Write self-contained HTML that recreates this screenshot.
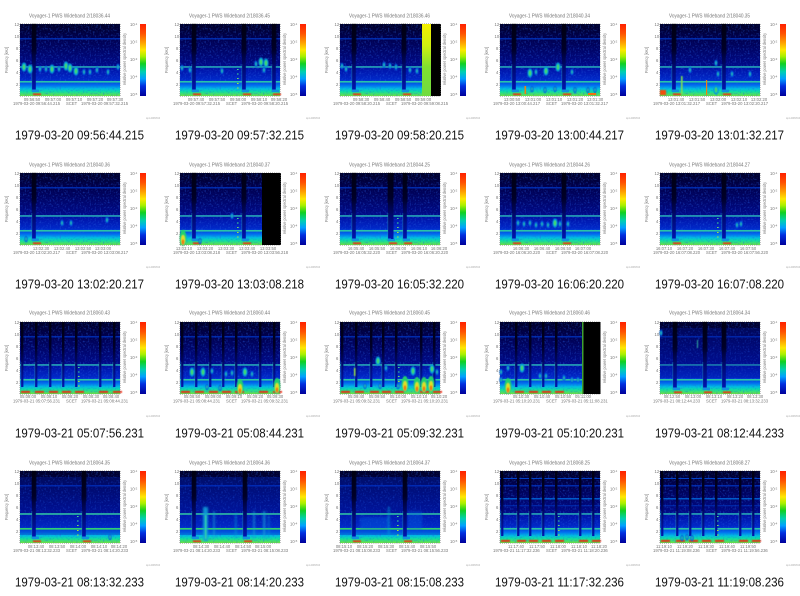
<!DOCTYPE html>
<html><head><meta charset="utf-8"><title>Voyager-1 PWS Wideband</title>
<style>
html,body{margin:0;padding:0;background:#fff}
svg{display:block}
text{font-family:"Liberation Sans",sans-serif}
.t{font-size:5px;fill:#777}
.s{font-size:4.2px;fill:#777}
.c{font-size:13px;fill:#111}
.u{font-size:3px;fill:#aaa}
</style></head><body>
<svg xmlns="http://www.w3.org/2000/svg" width="800" height="596" viewBox="0 0 800 596">
<defs>
<linearGradient id="bg" x1="0" y1="0" x2="0" y2="1">
<stop offset="0" stop-color="#000028"/><stop offset=".2" stop-color="#000050"/><stop offset=".58" stop-color="#000a88"/>
<stop offset=".6" stop-color="#0010a4"/><stop offset=".77" stop-color="#0028c8"/><stop offset=".85" stop-color="#0070f0"/>
<stop offset=".9" stop-color="#00c0e0"/><stop offset=".94" stop-color="#10e0a0"/><stop offset="1" stop-color="#70e040"/>
</linearGradient>
<linearGradient id="cb" x1="0" y1="0" x2="0" y2="1">
<stop offset="0" stop-color="#ff2000"/><stop offset=".13" stop-color="#ff5000"/><stop offset=".26" stop-color="#ffa000"/><stop offset=".36" stop-color="#ffe800"/><stop offset=".45" stop-color="#a8f000"/><stop offset=".55" stop-color="#10d020"/><stop offset=".66" stop-color="#00d0b0"/><stop offset=".76" stop-color="#00a0ff"/><stop offset=".86" stop-color="#0030e0"/><stop offset="1" stop-color="#00009a"/>
</linearGradient>
<linearGradient id="kg" x1="0" y1="0" x2="0" y2="1">
<stop offset="0" stop-color="#000010"/><stop offset=".38" stop-color="#000028"/><stop offset=".65" stop-color="#000870"/><stop offset="1" stop-color="#0014b0"/>
</linearGradient>
<linearGradient id="yb" x1="0" y1="0" x2="0" y2="1">
<stop offset="0" stop-color="#f6f000"/><stop offset=".3" stop-color="#d0f010"/><stop offset=".6" stop-color="#80e030"/><stop offset="1" stop-color="#70dc40"/>
</linearGradient>
<filter id="n" filterUnits="userSpaceOnUse" x="20" y="24" width="100" height="72"><feTurbulence type="fractalNoise" baseFrequency=".6" numOctaves="1" seed="4"/><feColorMatrix values="0 0 0 0 .02 0 0 0 0 .12 0 0 0 0 .75 3 0 0 0 -1.5"/></filter>
<filter id="b" filterUnits="userSpaceOnUse" x="-160" y="-120" width="480" height="360"><feGaussianBlur stdDeviation=".55"/></filter>
<filter id="bb" filterUnits="userSpaceOnUse" x="-160" y="-120" width="480" height="360"><feGaussianBlur stdDeviation="1"/></filter>
<g id="p">
<rect x="20" y="24" width="100" height="72" fill="url(#bg)"/>
<rect x="20" y="24" width="100" height="72" filter="url(#n)" opacity=".5"/>
<rect x="20" y="38.2" width="100" height="1.2" fill="#0034c0"/>
<rect x="20" y="66.2" width="100" height="1.5" fill="#28b0b8"/>
<rect x="20" y="81" width="100" height="1.6" fill="#28c4a8"/>
</g>
<g id="a">
<path d="M20 23.5H120M20 96.5H120M19.5 24V96M120.5 24V96" stroke="#777" stroke-width=".7" stroke-dasharray=".6 1.5" fill="none"/>
<rect x="140" y="24" width="6" height="72" fill="url(#cb)"/>
<text class="s" x="14.5" y="26">12</text><text class="s" x="14.5" y="38">10</text><text class="s" x="16" y="50">8</text><text class="s" x="16" y="62">6</text><text class="s" x="16" y="74">4</text><text class="s" x="16" y="86">2</text>
<text class="s" transform="rotate(-90 8 60)" x="8" y="60" text-anchor="middle" textLength="26" lengthAdjust="spacingAndGlyphs">Frequency [kHz]</text>
<text class="s" transform="rotate(-90 126 59)" x="126" y="59" text-anchor="middle" textLength="52" lengthAdjust="spacingAndGlyphs">relative power spectral density</text>
<text class="s" x="130" y="26">10<tspan dy="-1.2" font-size="3">-1</tspan></text><text class="s" x="130" y="43.5">10<tspan dy="-1.2" font-size="3">-2</tspan></text><text class="s" x="130" y="61">10<tspan dy="-1.2" font-size="3">-3</tspan></text><text class="s" x="130" y="78.5">10<tspan dy="-1.2" font-size="3">-4</tspan></text><text class="s" x="130" y="96">10<tspan dy="-1.2" font-size="3">-5</tspan></text>
<text class="u" x="146" y="119" textLength="14" lengthAdjust="spacingAndGlyphs">wp1-20060510</text>
</g>
<g id="k"><rect x="-.5" y="24" width="5" height="30" fill="#000010" opacity=".6" filter="url(#b)"/><rect x="0" y="24" width="3.8" height="66" fill="url(#kg)"/><rect x="-.5" y="64" width=".7" height="28" fill="#2090b0" opacity=".6"/><rect x="0" y="89.5" width="7" height="2.6" fill="#1090e0"/><g filter="url(#b)"><rect x="1" y="93.4" width="8" height="1.7" fill="#f03010"/></g></g>
<g id="m"><rect x="0" y="24" width="2.4" height="65" fill="url(#kg)"/><rect x="-.4" y="64" width=".6" height="28" fill="#30b0b0" opacity=".6"/><g filter="url(#b)"><rect x="0" y="93" width="9" height="1.8" fill="#f02808"/></g></g>
<g id="d" fill="#40d890"><rect x="0" y="69" width="1.6" height="1"/><rect x="0" y="73.5" width="1.6" height="1"/><rect x="0" y="78" width="1.6" height="1" fill="#70e060"/><rect x="0" y="83" width="1.6" height="1" fill="#a0e040"/><rect x="0" y="87.5" width="1.6" height="1" fill="#a0e040"/></g>
<g id="e" filter="url(#b)"><ellipse cx="0" cy="0" rx="2.6" ry="4.6" fill="#0098d8"/><ellipse cx="0" cy="0" rx="1.2" ry="2.8" fill="#40e060"/></g>
<g id="l" filter="url(#b)"><ellipse cx="0" cy="0" rx="1.7" ry="3.2" fill="#0060e0"/><ellipse cx="0" cy="0" rx=".7" ry="1.7" fill="#20c0a0"/></g>
<g id="h" filter="url(#b)"><ellipse cx="0" cy="0" rx="3.4" ry="8" fill="#20d070"/><ellipse cx="0" cy="2" rx="2" ry="5" fill="#e0e020"/><ellipse cx="0" cy="4" rx="1.2" ry="2.8" fill="#f07010"/></g>
</defs>
<rect width="800" height="596" fill="#fff"/>

<!-- ROW 1 -->
<g>
<use href="#p"/><use href="#k" x="32"/>
<use href="#e" x="24" y="67"/><use href="#e" x="30" y="69"/><use href="#l" x="40" y="69"/><use href="#l" x="46" y="69"/><use href="#e" x="52" y="69"/><use href="#l" x="59" y="69"/><use href="#e" x="66" y="66"/><use href="#e" x="70" y="68"/><use href="#e" x="76" y="71"/><use href="#l" x="84" y="72"/><use href="#l" x="90" y="72"/><use href="#l" x="97" y="70"/><use href="#l" x="108" y="72"/><use href="#l" x="118" y="67"/>
<use href="#a"/>
<text class="t" x="29" y="17.5" textLength="81" lengthAdjust="spacingAndGlyphs">Voyager-1 PWS Wideband 2/18036.44</text>
<text class="s" text-anchor="middle" y="101"><tspan x="32">09:56:50</tspan><tspan x="53">09:57:00</tspan><tspan x="74">09:57:10</tspan><tspan x="95">09:57:20</tspan><tspan x="115">09:57:30</tspan></text>
<text class="s" y="105"><tspan x="13">1979-03-20 09:56:44.215</tspan><tspan x="66">SCET</tspan><tspan x="81">1979-03-20 09:57:32.215</tspan></text>
<text class="c" x="15" y="139.3" textLength="129" lengthAdjust="spacingAndGlyphs">1979-03-20 09:56:44.215</text>
</g>
<g transform="translate(160,0)">
<use href="#p"/><use href="#k" x="32"/><use href="#k" x="82"/><use href="#k" x="112"/>
<use href="#d" x="77"/><use href="#l" x="22" y="68"/><use href="#l" x="30" y="70"/><use href="#e" x="101" y="62"/><use href="#e" x="106" y="63"/><use href="#l" x="96" y="64"/><use href="#l" x="104" y="70"/><use href="#l" x="62" y="71"/>
<use href="#a"/>
<text class="t" x="29" y="17.5" textLength="81" lengthAdjust="spacingAndGlyphs">Voyager-1 PWS Wideband 2/18036.45</text>
<text class="s" text-anchor="middle" y="101"><tspan x="36">09:57:40</tspan><tspan x="57">09:57:50</tspan><tspan x="78">09:58:00</tspan><tspan x="99">09:58:10</tspan><tspan x="119">09:58:20</tspan></text>
<text class="s" y="105"><tspan x="13">1979-03-20 09:57:32.215</tspan><tspan x="66">SCET</tspan><tspan x="81">1979-03-20 09:58:20.215</tspan></text>
<text class="c" x="15" y="139.3" textLength="129" lengthAdjust="spacingAndGlyphs">1979-03-20 09:57:32.215</text>
</g>
<g transform="translate(320,0)">
<use href="#p"/><use href="#k" x="32"/><use href="#k" x="82"/>
<use href="#l" x="22" y="66"/><use href="#l" x="26" y="69"/><use href="#l" x="64" y="65"/><use href="#l" x="70" y="66"/><use href="#l" x="76" y="67"/><use href="#l" x="90" y="70"/><use href="#l" x="97" y="71"/>
<rect x="102" y="24" width="9" height="72" fill="url(#yb)"/><rect x="111" y="24" width="10" height="72" fill="#000"/>
<use href="#a"/>
<text class="t" x="29" y="17.5" textLength="81" lengthAdjust="spacingAndGlyphs">Voyager-1 PWS Wideband 2/18036.46</text>
<text class="s" text-anchor="middle" y="101"><tspan x="41">09:58:30</tspan><tspan x="62">09:58:40</tspan><tspan x="83">09:58:50</tspan><tspan x="103">09:59:00</tspan></text>
<text class="s" y="105"><tspan x="13">1979-03-20 09:58:20.215</tspan><tspan x="66">SCET</tspan><tspan x="81">1979-03-20 09:59:08.215</tspan></text>
<text class="c" x="15" y="139.3" textLength="129" lengthAdjust="spacingAndGlyphs">1979-03-20 09:58:20.215</text>
</g>
<g transform="translate(480,0)">
<use href="#p"/><use href="#k" x="32"/><use href="#k" x="82"/>
<use href="#e" x="50" y="73"/><use href="#e" x="66" y="71"/><use href="#e" x="78" y="67"/><use href="#l" x="56" y="72"/><use href="#l" x="92" y="72"/>
<rect x="44.5" y="86" width="1.6" height="8" fill="#f08010"/><use href="#l" x="65" y="90"/><use href="#l" x="52" y="89"/><use href="#l" x="75" y="89"/><use href="#l" x="95" y="90"/><use href="#l" x="108" y="90"/><use href="#l" x="115" y="90"/><rect x="108" y="93" width="8" height="2" fill="#f07010"/>
<use href="#a"/>
<text class="t" x="29" y="17.5" textLength="81" lengthAdjust="spacingAndGlyphs">Voyager-1 PWS Wideband 2/18040.34</text>
<text class="s" text-anchor="middle" y="101"><tspan x="32">13:00:50</tspan><tspan x="53">13:01:00</tspan><tspan x="74">13:01:10</tspan><tspan x="95">13:01:20</tspan><tspan x="115">13:01:30</tspan></text>
<text class="s" y="105"><tspan x="13">1979-03-20 13:00:44.217</tspan><tspan x="66">SCET</tspan><tspan x="81">1979-03-20 13:01:32.217</tspan></text>
<text class="c" x="15" y="139.3" textLength="129" lengthAdjust="spacingAndGlyphs">1979-03-20 13:00:44.217</text>
</g>
<g transform="translate(640,0)">
<use href="#p"/><use href="#k" x="32"/><use href="#k" x="82"/>
<g filter="url(#b)"><rect x="20" y="90" width="6" height="5" fill="#f05010"/></g>
<g filter="url(#b)"><rect x="41" y="76" width="1.6" height="18" fill="#80e050"/></g><rect x="66" y="80" width="1.2" height="15" fill="#f08010"/><use href="#e" x="76" y="90"/><use href="#l" x="76" y="63"/><use href="#l" x="78" y="74"/><use href="#l" x="50" y="70"/><use href="#l" x="110" y="74"/><use href="#l" x="92" y="74"/>
<use href="#a"/>
<text class="t" x="29" y="17.5" textLength="81" lengthAdjust="spacingAndGlyphs">Voyager-1 PWS Wideband 2/18040.35</text>
<text class="s" text-anchor="middle" y="101"><tspan x="36">13:01:40</tspan><tspan x="57">13:01:50</tspan><tspan x="78">13:02:00</tspan><tspan x="99">13:02:10</tspan><tspan x="119">13:02:20</tspan></text>
<text class="s" y="105"><tspan x="13">1979-03-20 13:01:32.217</tspan><tspan x="66">SCET</tspan><tspan x="81">1979-03-20 13:02:20.217</tspan></text>
<text class="c" x="15" y="139.3" textLength="129" lengthAdjust="spacingAndGlyphs">1979-03-20 13:01:32.217</text>
</g>

<!-- ROW 2 -->
<g transform="translate(0,149)">
<use href="#p"/><use href="#k" x="32"/>
<use href="#l" x="26" y="90"/><use href="#l" x="107" y="71"/><use href="#l" x="62" y="74"/><use href="#l" x="71" y="74"/>
<use href="#a"/>
<text class="t" x="29" y="17.5" textLength="81" lengthAdjust="spacingAndGlyphs">Voyager-1 PWS Wideband 2/18040.36</text>
<text class="s" text-anchor="middle" y="101"><tspan x="41">13:02:30</tspan><tspan x="62">13:02:40</tspan><tspan x="83">13:02:50</tspan><tspan x="103">13:03:00</tspan></text>
<text class="s" y="105"><tspan x="13">1979-03-20 13:02:20.217</tspan><tspan x="66">SCET</tspan><tspan x="81">1979-03-20 13:03:08.217</tspan></text>
<text class="c" x="15" y="139.3" textLength="129" lengthAdjust="spacingAndGlyphs">1979-03-20 13:02:20.217</text>
</g>
<g transform="translate(160,149)">
<use href="#p"/><use href="#k" x="32"/><use href="#k" x="82"/><use href="#d" x="77"/>
<use href="#h" x="23" y="89"/><use href="#l" x="40" y="92"/><use href="#l" x="72" y="67"/>
<rect x="102" y="24" width="19" height="72" fill="#000"/>
<use href="#a"/>
<text class="t" x="29" y="17.5" textLength="81" lengthAdjust="spacingAndGlyphs">Voyager-1 PWS Wideband 2/18040.37</text>
<text class="s" text-anchor="middle" y="101"><tspan x="24">13:03:10</tspan><tspan x="45">13:03:20</tspan><tspan x="66">13:03:30</tspan><tspan x="87">13:03:40</tspan><tspan x="108">13:03:50</tspan></text>
<text class="s" y="105"><tspan x="13">1979-03-20 13:03:08.218</tspan><tspan x="66">SCET</tspan><tspan x="81">1979-03-20 13:03:56.218</tspan></text>
<text class="c" x="15" y="139.3" textLength="129" lengthAdjust="spacingAndGlyphs">1979-03-20 13:03:08.218</text>
</g>
<g transform="translate(320,149)">
<use href="#p"/><use href="#k" x="32"/><use href="#k" x="68"/><rect x="71" y="24" width="2.5" height="66" fill="url(#kg)"/><use href="#k" x="83"/><use href="#d" x="77"/>
<use href="#a"/>
<text class="t" x="29" y="17.5" textLength="81" lengthAdjust="spacingAndGlyphs">Voyager-1 PWS Wideband 2/18044.25</text>
<text class="s" text-anchor="middle" y="101"><tspan x="36">16:05:40</tspan><tspan x="57">16:05:50</tspan><tspan x="78">16:06:00</tspan><tspan x="99">16:06:10</tspan><tspan x="119">16:06:20</tspan></text>
<text class="s" y="105"><tspan x="13">1979-03-20 16:05:32.220</tspan><tspan x="66">SCET</tspan><tspan x="81">1979-03-20 16:06:20.220</tspan></text>
<text class="c" x="15" y="139.3" textLength="129" lengthAdjust="spacingAndGlyphs">1979-03-20 16:05:32.220</text>
</g>
<g transform="translate(480,149)">
<use href="#p"/><use href="#k" x="32"/><use href="#k" x="82"/>
<use href="#l" x="44" y="75"/><use href="#l" x="50" y="74"/><use href="#l" x="56" y="76"/><use href="#l" x="62" y="75"/><use href="#l" x="68" y="76"/><use href="#e" x="75" y="74"/><use href="#l" x="80" y="75"/><use href="#l" x="38" y="74"/><use href="#l" x="88" y="75"/>
<use href="#a"/>
<text class="t" x="29" y="17.5" textLength="81" lengthAdjust="spacingAndGlyphs">Voyager-1 PWS Wideband 2/18044.26</text>
<text class="s" text-anchor="middle" y="101"><tspan x="41">16:06:30</tspan><tspan x="62">16:06:40</tspan><tspan x="83">16:06:50</tspan><tspan x="103">16:07:00</tspan></text>
<text class="s" y="105"><tspan x="13">1979-03-20 16:06:20.220</tspan><tspan x="66">SCET</tspan><tspan x="81">1979-03-20 16:07:08.220</tspan></text>
<text class="c" x="15" y="139.3" textLength="129" lengthAdjust="spacingAndGlyphs">1979-03-20 16:06:20.220</text>
</g>
<g transform="translate(640,149)">
<use href="#p"/><use href="#k" x="32"/><use href="#k" x="82"/><use href="#d" x="77"/>
<use href="#l" x="101" y="75"/><use href="#l" x="97" y="76"/>
<use href="#a"/>
<text class="t" x="29" y="17.5" textLength="81" lengthAdjust="spacingAndGlyphs">Voyager-1 PWS Wideband 2/18044.27</text>
<text class="s" text-anchor="middle" y="101"><tspan x="24">16:07:10</tspan><tspan x="45">16:07:20</tspan><tspan x="66">16:07:30</tspan><tspan x="87">16:07:40</tspan><tspan x="108">16:07:50</tspan></text>
<text class="s" y="105"><tspan x="13">1979-03-20 16:07:08.220</tspan><tspan x="66">SCET</tspan><tspan x="81">1979-03-20 16:07:56.220</tspan></text>
<text class="c" x="15" y="139.3" textLength="129" lengthAdjust="spacingAndGlyphs">1979-03-20 16:07:08.220</text>
</g>

<!-- ROW 3 -->
<g transform="translate(0,298)">
<use href="#p"/><use href="#m" x="21"/><use href="#m" x="35"/><use href="#m" x="49"/><use href="#m" x="62"/><use href="#m" x="75"/><use href="#m" x="99"/><use href="#m" x="113"/><use href="#d" x="78"/>
<use href="#a"/>
<text class="t" x="29" y="16.5" textLength="81" lengthAdjust="spacingAndGlyphs">Voyager-1 PWS Wideband 2/18060.43</text>
<text class="s" text-anchor="middle" y="100"><tspan x="28">05:08:00</tspan><tspan x="49">05:08:10</tspan><tspan x="70">05:08:20</tspan><tspan x="91">05:08:30</tspan><tspan x="111">05:08:40</tspan></text>
<text class="s" y="104.5"><tspan x="13">1979-03-21 05:07:56.231</tspan><tspan x="66">SCET</tspan><tspan x="81">1979-03-21 05:08:44.231</tspan></text>
<text class="c" x="15" y="139.3" textLength="129" lengthAdjust="spacingAndGlyphs">1979-03-21 05:07:56.231</text>
</g>
<g transform="translate(160,298)">
<use href="#p"/><use href="#m" x="21"/><use href="#m" x="35"/><use href="#m" x="49"/><use href="#m" x="62"/><use href="#m" x="75"/><use href="#m" x="99"/><use href="#m" x="113"/>
<use href="#e" x="32" y="74"/><use href="#e" x="43" y="74"/><use href="#l" x="52" y="73"/><use href="#l" x="66" y="76"/><use href="#l" x="72" y="75"/><use href="#e" x="85" y="74"/><use href="#l" x="92" y="76"/>
<use href="#l" x="47" y="89"/><use href="#h" x="80" y="89"/><use href="#l" x="60" y="90"/><use href="#h" x="117" y="88"/>
<use href="#a"/>
<text class="t" x="29" y="16.5" textLength="81" lengthAdjust="spacingAndGlyphs">Voyager-1 PWS Wideband 2/18060.44</text>
<text class="s" text-anchor="middle" y="100"><tspan x="32">05:08:50</tspan><tspan x="53">05:09:00</tspan><tspan x="74">05:09:10</tspan><tspan x="95">05:09:20</tspan><tspan x="115">05:09:30</tspan></text>
<text class="s" y="104.5"><tspan x="13">1979-03-21 05:08:44.231</tspan><tspan x="66">SCET</tspan><tspan x="81">1979-03-21 05:09:32.231</tspan></text>
<text class="c" x="15" y="139.3" textLength="129" lengthAdjust="spacingAndGlyphs">1979-03-21 05:08:44.231</text>
</g>
<g transform="translate(320,298)">
<use href="#p"/><use href="#m" x="21"/><use href="#m" x="35"/><use href="#m" x="50"/><use href="#m" x="62"/><use href="#m" x="75"/><use href="#m" x="100"/><use href="#m" x="113"/><use href="#d" x="78"/>
<use href="#e" x="58" y="63"/><use href="#l" x="66" y="70"/><use href="#e" x="93" y="73"/><use href="#e" x="112" y="71"/><use href="#l" x="117" y="74"/><g filter="url(#b)"><rect x="34" y="70" width="1.4" height="8" fill="#a0e040"/></g>
<use href="#h" x="85" y="86"/><use href="#h" x="97" y="87"/><use href="#h" x="104" y="87"/><use href="#h" x="111" y="86"/><use href="#l" x="45" y="88"/><use href="#l" x="60" y="88"/><use href="#l" x="78" y="88"/>
<use href="#a"/>
<text class="t" x="29" y="16.5" textLength="81" lengthAdjust="spacingAndGlyphs">Voyager-1 PWS Wideband 2/18060.45</text>
<text class="s" text-anchor="middle" y="100"><tspan x="36">05:09:40</tspan><tspan x="57">05:09:50</tspan><tspan x="78">05:10:00</tspan><tspan x="99">05:10:10</tspan><tspan x="119">05:10:20</tspan></text>
<text class="s" y="104.5"><tspan x="13">1979-03-21 05:09:32.231</tspan><tspan x="66">SCET</tspan><tspan x="81">1979-03-21 05:10:20.231</tspan></text>
<text class="c" x="15" y="139.3" textLength="129" lengthAdjust="spacingAndGlyphs">1979-03-21 05:09:32.231</text>
</g>
<g transform="translate(480,298)">
<use href="#p"/><use href="#m" x="35"/><use href="#m" x="49"/><use href="#m" x="62"/><use href="#m" x="75"/>
<use href="#h" x="28" y="88"/><use href="#l" x="21" y="74"/><use href="#l" x="21" y="82"/><use href="#e" x="42" y="70"/><use href="#l" x="28" y="70"/><use href="#l" x="60" y="78"/><use href="#l" x="66" y="78"/><use href="#l" x="84" y="80"/><use href="#l" x="92" y="82"/><use href="#l" x="98" y="82"/>
<rect x="102" y="24" width="1.5" height="72" fill="#40a030"/><rect x="103.5" y="24" width="17" height="72" fill="#000"/>
<use href="#a"/>
<text class="t" x="29" y="16.5" textLength="81" lengthAdjust="spacingAndGlyphs">Voyager-1 PWS Wideband 2/18060.46</text>
<text class="s" text-anchor="middle" y="100"><tspan x="41">05:10:30</tspan><tspan x="62">05:10:40</tspan><tspan x="83">05:10:50</tspan><tspan x="103">05:11:00</tspan></text>
<text class="s" y="104.5"><tspan x="13">1979-03-21 05:10:20.231</tspan><tspan x="66">SCET</tspan><tspan x="81">1979-03-21 05:11:08.231</tspan></text>
<text class="c" x="15" y="139.3" textLength="129" lengthAdjust="spacingAndGlyphs">1979-03-21 05:10:20.231</text>
</g>
<g transform="translate(640,298)">
<use href="#p"/><rect x="20" y="30" width="100" height="50" fill="#0018a0" opacity=".3"/><use href="#k" x="33"/><use href="#k" x="63"/><use href="#k" x="82"/>
<g filter="url(#b)"><rect x="57" y="42" width="1" height="8" fill="#30b0a0"/></g><use href="#l" x="21" y="35"/>
<use href="#a"/>
<text class="t" x="29" y="16.5" textLength="81" lengthAdjust="spacingAndGlyphs">Voyager-1 PWS Wideband 2/18064.34</text>
<text class="s" text-anchor="middle" y="100"><tspan x="32">08:12:50</tspan><tspan x="53">08:13:00</tspan><tspan x="74">08:13:10</tspan><tspan x="95">08:13:20</tspan><tspan x="115">08:13:30</tspan></text>
<text class="s" y="104.5"><tspan x="13">1979-03-21 08:12:44.233</tspan><tspan x="66">SCET</tspan><tspan x="81">1979-03-21 08:13:32.233</tspan></text>
<text class="c" x="15" y="139.3" textLength="129" lengthAdjust="spacingAndGlyphs">1979-03-21 08:12:44.233</text>
</g>

<!-- ROW 4 -->
<g transform="translate(0,447)">
<use href="#p"/><rect x="20" y="30" width="100" height="58" fill="#0020b0" opacity=".3"/><rect x="20" y="66.3" width="100" height="1.4" fill="#30c0a0"/><rect x="20" y="81" width="100" height="1.6" fill="#30d070"/><use href="#k" x="32"/><use href="#k" x="82"/><use href="#d" x="77"/>
<use href="#l" x="110" y="90"/>
<use href="#a"/>
<text class="t" x="29" y="17.5" textLength="81" lengthAdjust="spacingAndGlyphs">Voyager-1 PWS Wideband 2/18064.35</text>
<text class="s" text-anchor="middle" y="101"><tspan x="36">08:13:40</tspan><tspan x="57">08:13:50</tspan><tspan x="78">08:14:00</tspan><tspan x="99">08:14:10</tspan><tspan x="119">08:14:20</tspan></text>
<text class="s" y="105"><tspan x="13">1979-03-21 08:13:32.233</tspan><tspan x="66">SCET</tspan><tspan x="81">1979-03-21 08:14:20.233</tspan></text>
<text class="c" x="15" y="139.3" textLength="129" lengthAdjust="spacingAndGlyphs">1979-03-21 08:13:32.233</text>
</g>
<g transform="translate(160,447)">
<use href="#p"/><rect x="20" y="30" width="100" height="58" fill="#0028c0" opacity=".35"/><rect x="20" y="66.3" width="100" height="1.4" fill="#30c0a0"/><rect x="20" y="81" width="100" height="1.6" fill="#30d070"/><use href="#k" x="32"/><use href="#k" x="83"/>
<g filter="url(#bb)" fill="#10a0d8"><rect x="43" y="60" width="5" height="34" opacity=".9"/><rect x="53" y="64" width="2" height="28" opacity=".6"/><rect x="75" y="66" width="1.6" height="26" opacity=".6"/><rect x="93" y="64" width="2" height="28" opacity=".6"/><rect x="103" y="64" width="2.4" height="28" opacity=".7"/><rect x="108" y="68" width="1.6" height="24" opacity=".5"/></g>
<g filter="url(#b)"><rect x="45" y="68" width="1.4" height="24" fill="#40e0a0" opacity=".8"/></g>
<use href="#a"/>
<text class="t" x="29" y="17.5" textLength="81" lengthAdjust="spacingAndGlyphs">Voyager-1 PWS Wideband 2/18064.36</text>
<text class="s" text-anchor="middle" y="101"><tspan x="41">08:14:30</tspan><tspan x="62">08:14:40</tspan><tspan x="83">08:14:50</tspan><tspan x="103">08:15:00</tspan></text>
<text class="s" y="105"><tspan x="13">1979-03-21 08:14:20.233</tspan><tspan x="66">SCET</tspan><tspan x="81">1979-03-21 08:15:08.233</tspan></text>
<text class="c" x="15" y="139.3" textLength="129" lengthAdjust="spacingAndGlyphs">1979-03-21 08:14:20.233</text>
</g>
<g transform="translate(320,447)">
<use href="#p"/><rect x="20" y="30" width="100" height="58" fill="#0028c0" opacity=".35"/><rect x="20" y="66.3" width="100" height="1.4" fill="#30c0a0"/><rect x="20" y="81" width="100" height="1.6" fill="#30d070"/><use href="#k" x="32"/><use href="#k" x="83"/><use href="#d" x="77"/>
<g filter="url(#bb)" fill="#0860e0"><rect x="40" y="70" width="28" height="12" opacity=".4"/><rect x="88" y="64" width="14" height="18" opacity=".4"/><rect x="68" y="60" width="1.6" height="28" fill="#10a0d8" opacity=".7"/></g>
<use href="#a"/>
<text class="t" x="29" y="17.5" textLength="81" lengthAdjust="spacingAndGlyphs">Voyager-1 PWS Wideband 2/18064.37</text>
<text class="s" text-anchor="middle" y="101"><tspan x="24">08:15:10</tspan><tspan x="45">08:15:20</tspan><tspan x="66">08:15:30</tspan><tspan x="87">08:15:40</tspan><tspan x="108">08:15:50</tspan></text>
<text class="s" y="105"><tspan x="13">1979-03-21 08:15:08.233</tspan><tspan x="66">SCET</tspan><tspan x="81">1979-03-21 08:15:56.233</tspan></text>
<text class="c" x="15" y="139.3" textLength="129" lengthAdjust="spacingAndGlyphs">1979-03-21 08:15:08.233</text>
</g>
<g transform="translate(480,447)">
<use href="#p"/><rect x="20" y="31" width="100" height="1" fill="#0040c8"/><rect x="20" y="51.2" width="100" height="1.2" fill="#0070e0"/><rect x="20" y="58.4" width="100" height=".8" fill="#0038c0"/><use href="#m" x="21"/><use href="#m" x="37"/><use href="#m" x="49"/><use href="#m" x="62"/><use href="#m" x="75"/><use href="#m" x="99"/><use href="#m" x="112"/><use href="#d" x="78"/>
<use href="#a"/>
<text class="t" x="29" y="17.5" textLength="81" lengthAdjust="spacingAndGlyphs">Voyager-1 PWS Wideband 2/18068.25</text>
<text class="s" text-anchor="middle" y="101"><tspan x="36">11:17:40</tspan><tspan x="57">11:17:50</tspan><tspan x="78">11:18:00</tspan><tspan x="99">11:18:10</tspan><tspan x="119">11:18:20</tspan></text>
<text class="s" y="105"><tspan x="13">1979-03-21 11:17:32.236</tspan><tspan x="66">SCET</tspan><tspan x="81">1979-03-21 11:18:20.236</tspan></text>
<text class="c" x="15" y="139.3" textLength="129" lengthAdjust="spacingAndGlyphs">1979-03-21 11:17:32.236</text>
</g>
<g transform="translate(640,447)">
<use href="#p"/><rect x="20" y="31" width="100" height="1" fill="#0040c8"/><rect x="20" y="51.2" width="100" height="1.2" fill="#0070e0"/><rect x="20" y="58.4" width="100" height=".8" fill="#0038c0"/><use href="#m" x="21"/><use href="#m" x="36"/><use href="#m" x="49"/><use href="#m" x="62"/><use href="#m" x="75"/><use href="#m" x="99"/><use href="#m" x="112"/><use href="#d" x="77"/>
<use href="#l" x="47" y="90"/><use href="#l" x="52" y="91"/><use href="#l" x="42" y="91"/>
<use href="#a"/>
<text class="t" x="29" y="17.5" textLength="81" lengthAdjust="spacingAndGlyphs">Voyager-1 PWS Wideband 2/18068.27</text>
<text class="s" text-anchor="middle" y="101"><tspan x="24">11:19:10</tspan><tspan x="45">11:19:20</tspan><tspan x="66">11:19:30</tspan><tspan x="87">11:19:40</tspan><tspan x="108">11:19:50</tspan></text>
<text class="s" y="105"><tspan x="13">1979-03-21 11:19:08.236</tspan><tspan x="66">SCET</tspan><tspan x="81">1979-03-21 11:19:56.236</tspan></text>
<text class="c" x="15" y="139.3" textLength="129" lengthAdjust="spacingAndGlyphs">1979-03-21 11:19:08.236</text>
</g>
</svg>
</body></html>
